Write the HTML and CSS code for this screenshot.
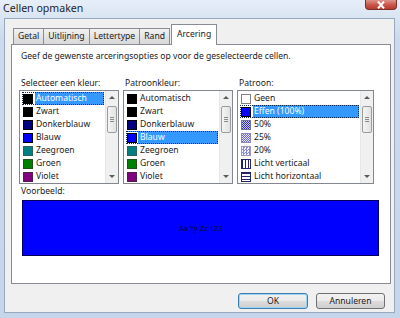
FILE: index.html
```html
<!DOCTYPE html>
<html lang="nl">
<head>
    <meta charset="UTF-8">
    <title>Cellen opmaken</title>
    <link rel="stylesheet" href="styles.css">
</head>
<body>

<div class="window">
    <div class="titlebar">
        <span class="title">Cellen opmaken</span>
        <div class="close">
            <svg width="10" height="8" viewBox="0 0 10 8"><path d="M2 0.5 L8 7.5 M8 0.5 L2 7.5" stroke="#fff" stroke-width="2"/></svg>
        </div>
    </div>

    <div class="client">
        <div class="tabs">
            <div class="tab">Getal</div>
            <div class="tab">Uitlijning</div>
            <div class="tab">Lettertype</div>
            <div class="tab">Rand</div>
            <div class="tab active">Arcering</div>
        </div>

        <div class="panel">
            <p class="intro">Geef de gewenste arceringsopties op voor de geselecteerde cellen.</p>

            <div class="pickers">
                <div class="picker picker-color">
                    <div class="caption">Selecteer een kleur:</div>
                    <div class="listbox">
                        <ul class="items">
                            <li class="item selected text-only"><span class="swatch sw-black"></span><span class="name">Automatisch</span></li>
                            <li class="item"><span class="swatch sw-black"></span><span class="name">Zwart</span></li>
                            <li class="item"><span class="swatch sw-navy"></span><span class="name">Donkerblauw</span></li>
                            <li class="item"><span class="swatch sw-blue"></span><span class="name">Blauw</span></li>
                            <li class="item"><span class="swatch sw-teal"></span><span class="name">Zeegroen</span></li>
                            <li class="item"><span class="swatch sw-green"></span><span class="name">Groen</span></li>
                            <li class="item"><span class="swatch sw-purple"></span><span class="name">Violet</span></li>
                        </ul>
                        <div class="scrollbar">
                            <span class="arrow up"></span>
                            <span class="thumb"><i></i></span>
                            <span class="arrow down"></span>
                        </div>
                    </div>
                </div>

                <div class="picker picker-pattern-color">
                    <div class="caption">Patroonkleur:</div>
                    <div class="listbox">
                        <ul class="items">
                            <li class="item"><span class="swatch sw-black"></span><span class="name">Automatisch</span></li>
                            <li class="item"><span class="swatch sw-black"></span><span class="name">Zwart</span></li>
                            <li class="item"><span class="swatch sw-navy"></span><span class="name">Donkerblauw</span></li>
                            <li class="item selected"><span class="swatch sw-blue"></span><span class="name">Blauw</span></li>
                            <li class="item"><span class="swatch sw-teal"></span><span class="name">Zeegroen</span></li>
                            <li class="item"><span class="swatch sw-green"></span><span class="name">Groen</span></li>
                            <li class="item"><span class="swatch sw-purple"></span><span class="name">Violet</span></li>
                        </ul>
                        <div class="scrollbar">
                            <span class="arrow up"></span>
                            <span class="thumb"><i></i></span>
                            <span class="arrow down"></span>
                        </div>
                    </div>
                </div>

                <div class="picker picker-pattern">
                    <div class="caption">Patroon:</div>
                    <div class="listbox">
                        <ul class="items">
                            <li class="item"><span class="swatch pt-none"></span><span class="name">Geen</span></li>
                            <li class="item selected text-only"><span class="swatch sw-blue"></span><span class="name">Effen (100%)</span></li>
                            <li class="item"><span class="swatch pt-50"></span><span class="name">50%</span></li>
                            <li class="item"><span class="swatch pt-25"></span><span class="name">25%</span></li>
                            <li class="item"><span class="swatch pt-20"></span><span class="name">20%</span></li>
                            <li class="item"><span class="swatch pt-vert"></span><span class="name">Licht verticaal</span></li>
                            <li class="item"><span class="swatch pt-horz"></span><span class="name">Licht horizontaal</span></li>
                        </ul>
                        <div class="scrollbar">
                            <span class="arrow up"></span>
                            <span class="thumb"><i></i></span>
                            <span class="arrow down"></span>
                        </div>
                    </div>
                </div>
            </div>

            <div class="caption sample-caption">Voorbeeld:</div>
            <div class="preview">Aa Yy Zz 123</div>
        </div>

        <div class="buttons">
            <button class="btn default">OK</button>
            <button class="btn">Annuleren</button>
        </div>
    </div>
</div>

</body>
</html>
```

FILE: styles.css
```css
body {
    margin: 0;
    font-family: "Noto Sans", "Open Sans", sans-serif;
    font-size: 8.6px;
    color: #1a1a1a;
}

ul {
    list-style: none;
    margin: 0;
    padding: 0;
}

.window {
    width: 400px;
    height: 318px;
    display: flex;
    flex-direction: column;
    background: linear-gradient(180deg, #e6eef8 0%, #cbdaec 12%, #c6d6ea 100%);
    overflow: hidden;
}

/* title bar */
.titlebar {
    height: 18px;
    display: flex;
    align-items: flex-start;
    padding-left: 3px;
    flex-shrink: 0;
}
.title {
    font-size: 10.6px;
    line-height: 16px;
    color: #1e1e1e;
}
.close {
    margin-left: auto;
    margin-right: 3px;
    width: 32px;
    height: 10px;
    display: flex;
    align-items: center;
    justify-content: center;
    background: linear-gradient(180deg, #e0938a 0%, #c9544a 55%, #b83b2f 100%);
    border: 1px solid #7e2d27;
    border-top: none;
    border-radius: 0 0 4px 4px;
    box-sizing: border-box;
}

/* client area */
.client {
    flex: 1;
    margin: 0 5px 5px 4px;
    background: #f0f0f0;
    border: 1px solid #97a9bf;
    display: flex;
    flex-direction: column;
}

.tabs {
    display: flex;
    align-items: flex-end;
    height: 20px;
    margin-top: 5px;
    padding-left: 8px;
    position: relative;
    z-index: 1;
}
.tab {
    height: 15px;
    line-height: 15px;
    padding: 0 4px;
    border: 1px solid #898c95;
    border-bottom: none;
    border-right: none;
    background: linear-gradient(180deg, #f2f2f2 0%, #e4e4e4 50%, #d8d8d8 100%);
    color: #1a1a1a;
}
.tab:nth-child(4) {
    border-right: 1px solid #898c95;
}
.tab.active {
    height: 20px;
    line-height: 18px;
    padding: 0 5px;
    margin-left: 1px;
    margin-bottom: -1px;
    border-right: 1px solid #898c95;
    background: #fff;
}

.panel {
    height: 238px;
    margin: 0 3px 0 6px;
    border: 1px solid #898c95;
    background: #fff;
    padding: 0 0 0 7px;
}

.intro {
    margin: 5px 0 0 2px;
    line-height: 13px;
}

.caption {
    line-height: 12px;
    padding-left: 2px;
    margin-bottom: 1px;
    white-space: nowrap;
}

.pickers {
    display: flex;
    gap: 4px;
    margin-top: 14px;
}
.picker {
    flex: none;
}
.picker-color { width: 100px; }
.picker-pattern-color { width: 110px; }
.picker-pattern { width: 137px; }

.listbox {
    height: 94px;
    box-sizing: border-box;
    border: 1px solid #828790;
    display: flex;
    background: #fff;
}
.items {
    flex: 1;
    padding: 1px 1px 0 2px;
    overflow: hidden;
}
.item {
    height: 13px;
    display: flex;
    align-items: center;
    white-space: nowrap;
}
.swatch {
    width: 10px;
    height: 10px;
    box-sizing: border-box;
    border: 1px solid #000;
    margin: 0 2px 0 1px;
    flex-shrink: 0;
}
.name {
    line-height: 13px;
    padding-left: 1px;
    flex: 1;
}
.item.selected {
    background: #3399ff;
    color: #fff;
    outline: 1px dotted #0a2a55;
    outline-offset: -1px;
}
.item.selected .swatch {
    box-shadow: 0 0 0 1px #fff;
}
.item.selected.text-only {
    background: #fff;
}
.item.selected.text-only .name {
    background: #3399ff;
}

.sw-black { background: #000; }
.sw-navy { background: #000080; }
.sw-blue { background: #0000ff; }
.sw-teal { background: #008080; border-color: #2d5f5f; }
.sw-green { background: #008000; border-color: #1f4f1f; }
.sw-purple { background: #800080; border-color: #4f1f4f; }

.pt-none { background: #fff; border-color: #808080; }
.pt-50 {
    background: repeating-conic-gradient(#2a2ad0 0 25%, #c8c8f0 0 50%) 0 0 / 2px 2px;
    border-color: #7070a8;
}
.pt-25 {
    background: repeating-conic-gradient(#6a6ad0 0 25%, #e4e4f6 0 50%) 0 0 / 2px 2px;
    border-color: #8888b8;
}
.pt-20 {
    background: repeating-conic-gradient(#8a8ad8 0 25%, #f4f4fc 0 50%) 0 0 / 3px 3px;
    border-color: #9a9ac0;
}
.pt-vert {
    background: repeating-linear-gradient(90deg, #23236a 0 1px, #fff 1px 3px);
    border-color: #23236a;
}
.pt-horz {
    background: repeating-linear-gradient(180deg, #23236a 0 1px, #fff 1px 3px);
    border-color: #23236a;
}

/* scrollbar */
.scrollbar {
    width: 12px;
    background: #f0f0f0;
    border-left: 1px solid #e6e6e6;
    display: flex;
    flex-direction: column;
    align-items: center;
}
.arrow {
    width: 0;
    height: 0;
    border-left: 3px solid transparent;
    border-right: 3px solid transparent;
    margin: 5px 0;
}
.arrow.up {
    border-bottom: 3px solid #5a5a5a;
}
.arrow.down {
    border-top: 3px solid #5a5a5a;
    margin-top: auto;
}
.thumb {
    width: 10px;
    height: 27px;
    margin-top: 2px;
    box-sizing: border-box;
    border: 1px solid #9b9b9b;
    border-radius: 2px;
    background: linear-gradient(90deg, #f4f4f4, #e2e2e2);
    display: flex;
    align-items: center;
    justify-content: center;
}
.thumb i {
    width: 4px;
    height: 5px;
    background: repeating-linear-gradient(180deg, #8a8a8a 0 1px, transparent 1px 2px);
}

.sample-caption {
    margin-top: 1px;
}

.preview {
    width: 357px;
    height: 56px;
    margin: 3px 0 0 3px;
    box-sizing: border-box;
    border: 1px solid #000060;
    background: #0000ff;
    color: #000040;
    font-size: 7.5px;
    display: flex;
    align-items: center;
    justify-content: center;
}

.buttons {
    display: flex;
    justify-content: flex-end;
    gap: 8px;
    margin-top: 9px;
    padding-right: 9px;
}
.btn {
    height: 16px;
    padding: 0;
    font-family: inherit;
    font-size: 8.6px;
    color: #1a1a1a;
    border: 1px solid #707070;
    border-radius: 3px;
    background: linear-gradient(180deg, #f2f2f2 0%, #ebebeb 50%, #dddddd 51%, #cfcfcf 100%);
    width: 69px;
}
.btn.default {
    width: 70px;
    border-color: #3c7fb1;
    box-shadow: inset 0 0 0 1px #9fd3f2;
}
```
